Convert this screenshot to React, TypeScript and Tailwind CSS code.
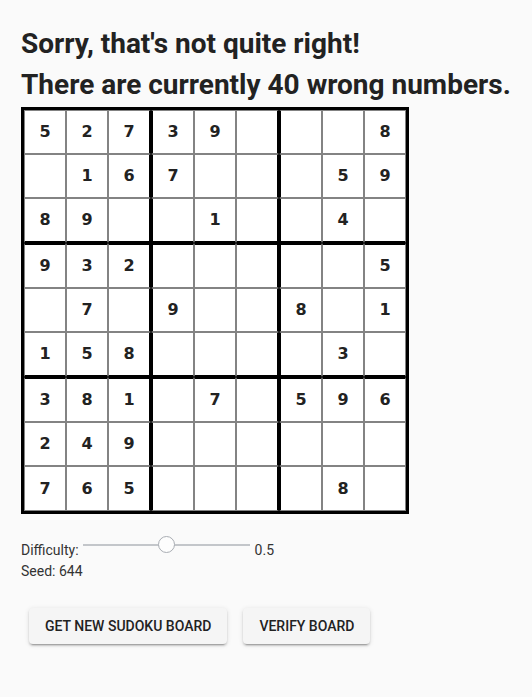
import React from 'react';

const board: (number | null)[][] = [
  [5, 2, 7, 3, 9, null, null, null, 8],
  [null, 1, 6, 7, null, null, null, 5, 9],
  [8, 9, null, null, 1, null, null, 4, null],
  [9, 3, 2, null, null, null, null, null, 5],
  [null, 7, null, 9, null, null, 8, null, 1],
  [1, 5, 8, null, null, null, null, 3, null],
  [3, 8, 1, null, 7, null, 5, 9, 6],
  [2, 4, 9, null, null, null, null, null, null],
  [7, 6, 5, null, null, null, null, 8, null],
];

const Cell = ({ value, r, c }: { value: number | null; r: number; c: number }) => {
  const left = c === 3 || c === 6 ? 'border-l-2 border-l-black' : 'border-l border-l-[#838383]';
  const right = c === 2 || c === 5 ? 'border-r-2 border-r-black' : 'border-r border-r-[#838383]';
  const top = r === 3 || r === 6 ? 'border-t-2 border-t-black' : 'border-t border-t-[#838383]';
  const bottom = r === 2 || r === 5 ? 'border-b-2 border-b-black' : 'border-b border-b-[#838383]';
  const w = c === 2 || c === 3 || c === 5 || c === 6 ? 'w-[43px]' : 'w-[42px]';
  const h = r === 2 || r === 3 || r === 5 || r === 6 || r === 8 ? 'h-[45px]' : 'h-[44px]';
  return (
    <div className={`${w} ${h} flex items-center justify-center bg-white ${left} ${right} ${top} ${bottom}`}>
      <span className="text-[16px] font-bold text-[#222]" style={{ fontFamily: '"DejaVu Sans", sans-serif' }}>
        {value ?? ''}
      </span>
    </div>
  );
};

const Slider = ({ value }: { value: number }) => (
  <div className="relative h-[18px] w-[167px]">
    <div className="absolute left-0 right-0 top-[3px] h-[2px] bg-[#c3c6ca]" />
    <div
      className="absolute top-[-5px] w-[17px] h-[17px] rounded-full border border-[#a9adb3] bg-[#fdfdfd]"
      style={{ left: `${value * 167 - 8}px` }}
    />
  </div>
);

const App = () => {
  return (
    <div
      className="min-h-[697px] bg-[#fafafa] px-[21px] pt-[23px] text-[#222]"
      style={{ fontFamily: 'Roboto, "Liberation Sans", sans-serif' }}
    >
      <h2 className="text-[28px] leading-[41px] font-bold">Sorry, that's not quite right!</h2>
      <h2 className="text-[28px] leading-[41px] font-bold">There are currently 40 wrong numbers.</h2>

      <div className="mt-[2px] inline-flex flex-col border-[3px] border-black">
        {board.map((row, r) => (
          <div key={r} className="flex">
            {row.map((v, c) => (
              <Cell key={c} value={v} r={r} c={c} />
            ))}
          </div>
        ))}
      </div>

      <div className="mt-[27px] text-[14px] leading-[18px] text-[#333]">
        <div className="flex items-start">
          <span>Difficulty:</span>
          <div className="ml-[4px]">
            <Slider value={0.5} />
          </div>
          <span className="ml-[5px]">0.5</span>
        </div>
        <div className="mt-[3px]">Seed: 644</div>
      </div>

      <div className="mt-[28px] flex gap-4 pl-2">
        <button className="h-9 px-4 rounded bg-[#f5f5f5] text-[14px] font-medium uppercase text-[#222] shadow-[0_3px_1px_-2px_rgba(0,0,0,0.2),0_2px_2px_0_rgba(0,0,0,0.14),0_1px_5px_0_rgba(0,0,0,0.12)]">
          Get new Sudoku board
        </button>
        <button className="h-9 px-4 rounded bg-[#f5f5f5] text-[14px] font-medium uppercase text-[#222] shadow-[0_3px_1px_-2px_rgba(0,0,0,0.2),0_2px_2px_0_rgba(0,0,0,0.14),0_1px_5px_0_rgba(0,0,0,0.12)]">
          Verify board
        </button>
      </div>
    </div>
  );
};

export default App;
